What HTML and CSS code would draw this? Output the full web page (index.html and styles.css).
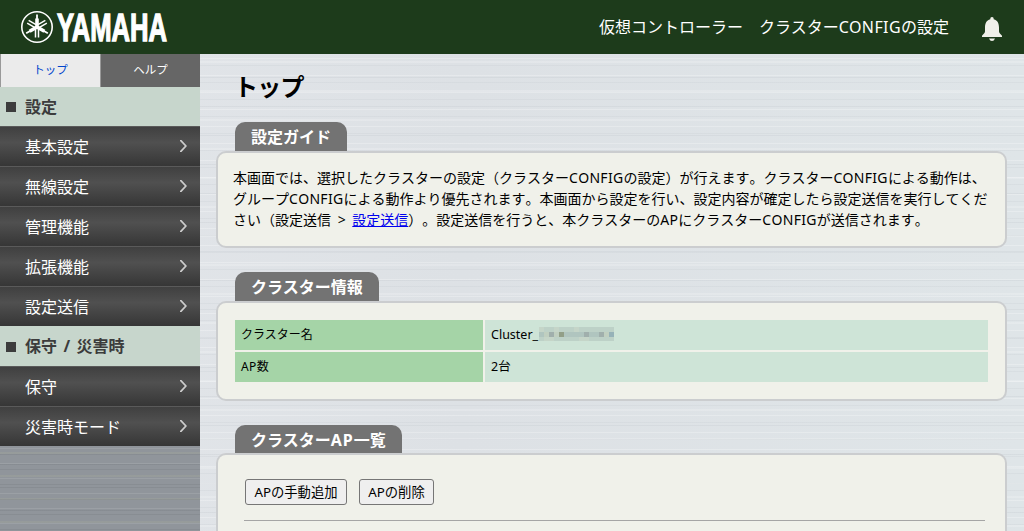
FILE: index.html
```html
<!DOCTYPE html>
<html lang="ja">
<head>
<meta charset="utf-8">
<title>仮想コントローラー</title>
<link rel="stylesheet" href="styles.css">
</head>
<body>
<header class="header">
  <svg class="logo" width="150" height="36" viewBox="20 9 150 36" aria-label="YAMAHA">
    <circle cx="37" cy="27" r="15.200" fill="none" stroke="#fff" stroke-width="1.6"/>
    <g fill="none" stroke="#fff">
      <g id="fork">
        <path d="M37 27V14.500" stroke-width="1.800"/>
        <path d="M37 27V18.500" stroke-width="3.600"/>
        <path d="M35.500 27V37.500M38.500 27V37.500" stroke-width="1.500"/>
      </g>
      <use href="#fork" transform="rotate(120 37 27)"/>
      <use href="#fork" transform="rotate(240 37 27)"/>
    </g>
    <text class="logo-text" x="57" y="40.500" textLength="110" lengthAdjust="spacingAndGlyphs">YAMAHA</text>
  </svg>
  <div class="header-title">仮想コントローラー　クラスター<span class="latin-16">CONFIG</span>の設定</div>
  <svg class="bell" width="20" height="24" viewBox="0 0 20 24">
    <path d="M10 0C8.800 0 8.300.8 8.300 2.200C4.300 3.200 3 6.500 3 10.500V14.500C3 16 1.500 17 0 18.800V20H20V18.800C18.500 17 17 16 17 14.500V10.500C17 6.500 15.700 3.200 11.700 2.200C11.700.8 11.200 0 10 0Z" fill="#f0f0ea"/>
    <path d="M7 21.500H13Q12 24 10 24T7 21.500Z" fill="#f0f0ea"/>
  </svg>
</header>
<div class="body">
  <nav class="sidebar">
    <div class="tabs"><a class="tab tab-active">トップ</a><a class="tab">ヘルプ</a></div>
    <h2 class="group">設定</h2>
    <a class="item">基本設定<i class="chevron"></i></a>
    <a class="item">無線設定<i class="chevron"></i></a>
    <a class="item">管理機能<i class="chevron"></i></a>
    <a class="item">拡張機能<i class="chevron"></i></a>
    <a class="item">設定送信<i class="chevron"></i></a>
    <h2 class="group group-second">保守 / 災害時</h2>
    <a class="item">保守<i class="chevron"></i></a>
    <a class="item">災害時モード<i class="chevron"></i></a>
  </nav>
  <main class="main">
    <h1 class="title">トップ</h1>
    <section class="section">
      <h3 class="label label-guide">設定ガイド</h3>
      <div class="panel panel-guide">
        本画面では、選択したクラスターの設定（クラスター<span class="latin-14">CONFIG</span>の設定）が行えます。クラスター<span class="latin-14">CONFIG</span>による動作は、<br>グループ<span class="latin-14">CONFIG</span>による動作より優先されます。本画面から設定を行い、設定内容が確定したら設定送信を実行してくだ<br>さい（設定送信 <span class="gt">&gt;</span> <a class="link" href="#">設定送信</a>）。設定送信を行うと、本クラスターの<span class="latin-14">AP</span>にクラスター<span class="latin-14">CONFIG</span>が送信されます。
      </div>
    </section>
    <section class="section">
      <h3 class="label label-info">クラスター情報</h3>
      <div class="panel panel-info">
        <dl class="table">
          <dt class="key">クラスター名</dt>
          <dd class="value">Cluster_<svg class="mosaic" width="75" height="14" viewBox="0 0 75 14" shape-rendering="crispEdges">
            <path d="M0 0H75V14H0Z" fill="#bdd1c7"/>
            <path d="M0 0H5V5H0ZM15 0H20V5H15ZM35 0H40V5H35ZM5 10H15V14H5ZM40 10H50V14H40ZM65 5H70V10H65Z" fill="#c5d5c8"/>
            <path d="M0 5H75V10H0Z" fill="#b0c5bf"/>
            <path d="M5 5H10V10H5ZM15 5H20V10H15ZM65 5H70V10H65Z" fill="#c0cfc0"/>
            <path d="M10 5H15V10H10ZM45 5H50V10H45ZM60 5H65V10H60Z" fill="#a0afac"/>
            <path d="M20 5H25V10H20Z" fill="#929f88"/>
            <path d="M70 5H75V10H70Z" fill="#96b2b8"/>
          </svg></dd>
          <dt class="key"><span class="ap">AP</span>数</dt>
          <dd class="value">2台</dd>
        </dl>
      </div>
    </section>
    <section class="section">
      <h3 class="label label-list">クラスター<span class="label-ap">AP</span>一覧</h3>
      <div class="panel panel-list">
        <div class="buttons"><button class="btn btn-add">APの手動追加</button><button class="btn btn-delete">APの削除</button></div>
        <hr class="rule">
      </div>
    </section>
  </main>
</div>
</body>
</html>
```

FILE: styles.css
```css
* { box-sizing: border-box; }
body {
  margin: 0;
  height: 531px;
  overflow: hidden;
  color: #000;
  font-family: "Noto Sans", "Noto Sans CJK JP", sans-serif;
  font-size: 14px;
  text-spacing-trim: space-all;
}
h1, h2, h3, dl, dd { margin: 0; }
.header {
  display: flex;
  align-items: center;
  height: 54px;
  padding: 0 22px 0 20px;
  background: #1d3b1b;
  color: #fff;
}
.logo { overflow: visible; }
.logo-text { font: bold 39px "Liberation Sans", Arial, sans-serif; fill: #fff; stroke: #fff; stroke-width: 1.400px; }
.header-title { margin-left: auto; margin-top: -1px; font-size: 16px; line-height: 24px; white-space: nowrap; }
.latin-16 { letter-spacing: 0.4px; }
.latin-14 { letter-spacing: 0.3px; }
.bell { margin: 3px 0 0 33px; }
.body {
  display: flex;
  height: 477px;
  background:
    repeating-linear-gradient(180deg, transparent 0 4px, rgba(255,255,255,.25) 4px 5px, transparent 5px 11px, rgba(190,196,202,.2) 11px 12px, transparent 12px 17px),
    repeating-linear-gradient(180deg, transparent 0 7px, rgba(255,255,255,.18) 7px 9px, transparent 9px 23px, rgba(190,196,202,.25) 23px 24px, transparent 24px 29px),
    linear-gradient(90deg, #e3e6ea, #dde1e5 45%, #dfe5e8);
}
.sidebar {
  flex: none;
  width: 200px;
  background:
    repeating-linear-gradient(180deg, transparent 0 4px, rgba(255,255,255,.1) 4px 5px, transparent 5px 10px, rgba(90,95,100,.15) 10px 11px, transparent 11px 15px),
    repeating-linear-gradient(180deg, transparent 0 7px, rgba(160,165,155,.4) 7px 9px, transparent 9px 19px, rgba(110,115,120,.25) 19px 20px, transparent 20px 23px),
    #90959b;
}
.tabs { display: flex; height: 33px; }
.tab {
  flex: 1;
  border-left: 1px solid #999;
  background: #666;
  color: #fff;
  font-size: 11.500px;
  line-height: 32px;
  text-align: center;
}
.tab-active { background: #ebebeb; color: #04c; }
.group {
  display: flex;
  align-items: center;
  gap: 9px;
  height: 39px;
  padding-left: 6px;
  background: #c7d6cc;
  color: #3c3c3c;
  font-size: 16px;
  line-height: 22px;
  word-spacing: 2.300px;
}
.group::before { content: ""; width: 10px; height: 10px; margin-top: 1px; background: #3c3c3c; }
.group-second { height: 40px; }
.item {
  display: flex;
  align-items: center;
  justify-content: space-between;
  height: 40px;
  padding: 0 13px 1px 25px;
  border-top: 1px solid #5a5a5a;
  background: linear-gradient(#404040, #505050 40%, #363636);
  color: #fff;
  font-size: 16px;
}
.chevron {
  width: 7px;
  height: 12px;
  background: #ccc;
  clip-path: polygon(0 0, 1.500px 0, 7px 6px, 1.500px 12px, 0 12px, 0 11px, 4.800px 6px, 0 1px);
}
.main { flex: 1; padding: 14px 17px 0 16px; }
.title { height: 54px; padding-left: 18px; font-size: 24px; line-height: 38px; letter-spacing: -0.8px; }
.section { margin-bottom: 24px; }
.label {
  width: max-content;
  height: 29px;
  margin-left: 19px;
  padding-left: 16px;
  border-radius: 10px 10px 0 0;
  background: #737373;
  color: #fff;
  font-size: 16px;
  line-height: 31px;
  white-space: nowrap;
}
.label-guide { width: 112px; }
.label-info { width: 144px; }
.label-list { width: 167px; height: 28px; }
.label-ap { letter-spacing: 1px; }
.panel { border: 2px solid #cbcdcf; border-radius: 10px; background: #f0f1ea; }
.panel-guide { height: 97px; padding: 14px 0 0 15px; line-height: 21px; white-space: nowrap; font-kerning: none; }
.gt { margin: 0 3px; }
.link { color: #00e; }
.panel-info { height: 100px; padding: 17px; }
.table { display: grid; grid-template-columns: 248px 503px; grid-auto-rows: 30px; gap: 2px; font-size: 12px; line-height: 29px; }
.key, .value { padding-left: 6px; }
.key { background: #a5d4a7; }
.value { display: flex; background: #cee4d7; font-size: 12.500px; }
.ap { letter-spacing: 0.4px; }
.mosaic { margin-top: 7px; margin-left: 1px; }
.panel-list { height: 78px; padding: 24px 20px 0 26px; border-bottom: 0; border-radius: 10px 10px 0 0; }
.section:last-child { margin-bottom: 0; }
.buttons { display: flex; gap: 12px; padding-left: 1px; }
.btn {
  height: 26px;
  padding: 0;
  border: 1px solid #767676;
  border-radius: 3px;
  background: #efefef;
  color: #000;
  font: 13.333px/22px "Noto Sans", "Noto Sans CJK JP", sans-serif;
}
.btn-add { width: 102px; }
.btn-delete { width: 75px; }
.rule { height: 2px; margin: 15px 0 0; border: solid; border-width: 1px 0 0; border-color: #a5a5a5; }
```
